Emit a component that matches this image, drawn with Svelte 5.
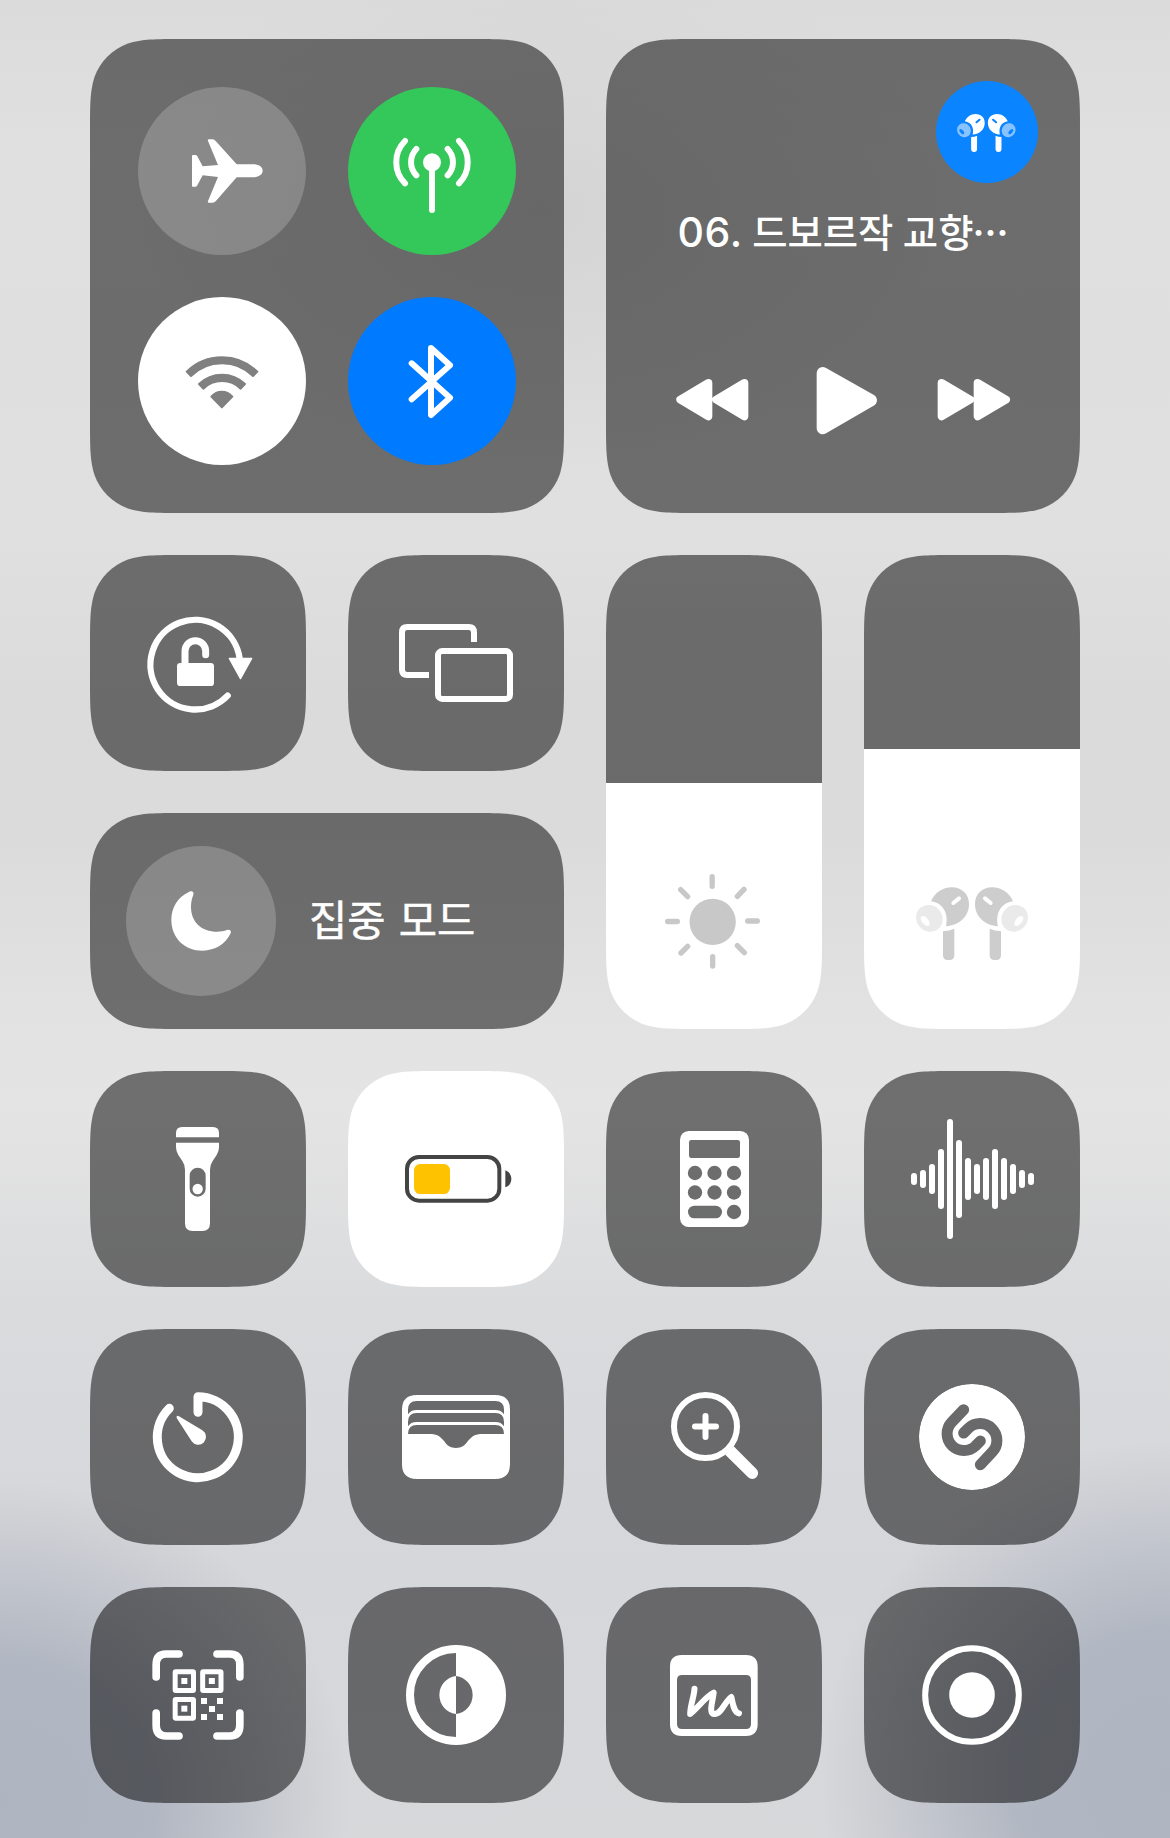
<script>
  // Continuous-curvature corner outline for a w × h tile.
  function squircle(w, h, r = 60) {
    const a = 1.52866 * r, b = 1.08849 * r, c = 0.86841 * r;
    const d = 0.63149 * r, e = 0.07491 * r, f = 0.37282 * r, g = 0.16906 * r;
    return `path("M${a} 0H${w - a}C${w - b} 0 ${w - c} 0 ${w - d} ${e}C${w - f} ${g} ${w - g} ${f} ${w - e} ${d}C${w} ${c} ${w} ${b} ${w} ${a}V${h - a}C${w} ${h - b} ${w} ${h - c} ${w - e} ${h - d}C${w - g} ${h - f} ${w - f} ${h - g} ${w - d} ${h - e}C${w - c} ${h} ${w - b} ${h} ${w - a} ${h}H${a}C${b} ${h} ${c} ${h} ${d} ${h - e}C${f} ${h - g} ${g} ${h - f} ${e} ${h - d}C0 ${h - c} 0 ${h - b} 0 ${h - a}V${a}C0 ${b} 0 ${c} ${e} ${d}C${g} ${f} ${f} ${g} ${d} ${e}C${c} 0 ${b} 0 ${a} 0Z")`;
  }

  const square = squircle(216, 216);
  const large = squircle(474, 474);
  const wide = squircle(474, 216);
  const tall = squircle(216, 474);

  const brightness = 246;
  const volume = 280;

  const wave = [18, 27, 45, 90, 180, 117, 63, 45, 63, 90, 63, 45, 27, 18];
  const keys = [339, 397.5, 456].flatMap((y) => [285, 343.5, 402].map((x) => [x, y])).filter(([x, y]) => y < 456 || x === 402);
  const finders = [[278, 268], [360.5, 268], [278, 351]];
  const dots = [[363, 354], [411, 354], [387, 378], [363, 402], [411, 402]];
</script>

{#snippet bud()}
  <path class="head" d="M993 424C1004 398 1028 382 1055 382C1086 382 1107 402 1107 433C1107 470 1077 497 1038 499C1046 466 1034 430 993 424Z" />
  <path class="slot" d="M1060 429L1077 415" />
  <ellipse class="tip" cx="988" cy="475" rx="41.5" ry="38.5" transform="rotate(50 988 475)" />
  <ellipse class="hole" cx="975.500" cy="483" rx="18" ry="9.500" transform="rotate(50 975.500 483)" />
  <path class="head" d="M1029 514Q1048 513 1063 506V586Q1063 600 1049 600H1043Q1029 600 1029 586Z" />
{/snippet}

{#snippet airpods(box)}
  <svg class="airpods" viewBox={box}>
    {@render bud()}
    <g transform="translate(2232 0) scale(-1 1)">{@render bud()}</g>
  </svg>
{/snippet}

<main>
  <section class="tile big connectivity" style:clip-path={large}>
    <button class="round dim" aria-label="에어플레인 모드">
      <svg viewBox="174 171 504 504">
        <path d="M336 378Q336 375 339 375H346Q350 375 352 379L368 409L414 405L384 333Q382 328 387 328H398Q403 328 407 333L470 403H520C538 403 548 412 548 422.500C548 433 538 441.500 520 441.500H470L407 514Q403 518 398 518H387Q382 518 384 513L414 441L368 436L352 466Q350 470.500 346 470.500H339Q336 470.500 336 467Z" />
      </svg>
    </button>
    <button class="round green" aria-label="셀룰러 데이터">
      <svg viewBox="804 171 504 504">
        <circle cx="1056" cy="397" r="27" />
        <path class="line s18" d="M1056 397V540M1009 357A57 57 0 0 0 1009 436M1103 357A57 57 0 0 1 1103 436M975 333A90 90 0 0 0 975 460M1137 333A90 90 0 0 1 1137 460" />
      </svg>
    </button>
    <button class="round white" aria-label="Wi-Fi">
      <svg class="wifi" viewBox="174 801 504 504">
        <path d="M320 1025A152 152 0 0 1 532 1025L519 1038A132 132 0 0 0 333 1038Z" />
        <path d="M357 1062A99 99 0 0 1 495 1062L482 1076A80 80 0 0 0 370 1076Z" />
        <path d="M394 1100Q407 1085 425.500 1085Q444 1085 457 1100L425.500 1132Z" />
      </svg>
    </button>
    <button class="round blue" aria-label="Bluetooth">
      <svg viewBox="804 801 504 504">
        <path class="line s18" d="M995 1000L1110 1103L1053 1155V954L1110 1006L995 1108" />
      </svg>
    </button>
  </section>

  <section class="tile big media" style:clip-path={large}>
    <button class="route" aria-label="AirPods Pro">{@render airpods('827.7 192.7 584.6 584.6')}</button>
    <p class="title"><span class="num">06.</span> 드보르작 교향<span class="dots">…</span></p>
    <div class="controls">
      <svg viewBox="217 991 240 240"><path class="tri s24" d="M326 1060L242 1110L326 1160ZM434 1060L350 1110L434 1160Z" /></svg>
      <svg viewBox="620 991 240 240"><path class="tri s36" d="M667 1030L812 1112L667 1196Z" /></svg>
      <svg viewBox="1001 991 240 240"><path class="tri s24" d="M1024 1060L1109 1110L1024 1160ZM1132 1060L1217 1110L1132 1160Z" /></svg>
    </div>
  </section>

  <button class="tile" style:clip-path={square} aria-label="화면 방향 고정">
    <svg viewBox="30 15 648 648">
      <path class="line s19" d="M479 325A134.500 134.500 0 1 0 443 437" />
      <path class="tri s4" d="M448 325H515L481.500 386Z" />
      <rect x="291" y="339" width="111" height="69" rx="10" />
      <path class="line s21" d="M315 347V303A31 31 0 0 1 377 303V314" />
    </svg>
  </button>
  <button class="tile" style:clip-path={square} aria-label="화면 미러링">
    <svg viewBox="804 15 648 648">
      <rect class="line s18" x="1074" y="303" width="216" height="144" rx="13" />
      <path class="line s18 butt" d="M1182 276V247Q1182 231 1166 231H982Q966 231 966 247V359Q966 375 982 375H1047" />
    </svg>
  </button>

  <section class="tile slider" style:clip-path={tall} style:--level="{brightness}px">
    <svg class="sun" viewBox="18 159 648 648">
      <circle cx="338" cy="485.500" r="69.500" />
      <path d="M336.500 350V379M338 590V618M203 484.500H232M443 483H472M412 409L432 388M242 389L263 410M243 579L263 559M412 557L433 578" />
    </svg>
  </section>
  <section class="tile slider" style:clip-path={tall} style:--level="{volume}px">
    {@render airpods('792 159 648 648')}
  </section>

  <section class="tile focus" style:clip-path={wide}>
    <span class="round dim moon">
      <svg viewBox="138 138 450 450">
        <path d="M328 275C336 271 343 276 340 284C336 294 333 306 333 320C333 366 364 395 412 395C422 395 432 393 441 390C449 387 455 393 452 400C437 432 405 452 368 452C314 452 274 414 274 359C274 322 294 290 328 275Z" />
      </svg>
    </span>
    <span class="label">집중 모드</span>
  </section>

  <button class="tile" style:clip-path={square} aria-label="손전등">
    <svg viewBox="30 33 648 648">
      <path d="M288 232V219Q288 201 306 201H399Q417 201 417 219V232Z" />
      <path fill-rule="evenodd" d="M288 248H417V262Q417 274 410 285L398 303Q390 314 390 330V490Q390 513 367 513H338Q315 513 315 490V330Q315 314 307 303L295 285Q288 274 288 262ZM329 347V386A24 24 0 0 0 377 386V347A24 24 0 0 0 329 347Z" />
      <circle cx="353" cy="387" r="15.500" />
    </svg>
  </button>
  <button class="tile lit" style:clip-path={square} aria-label="저전력 모드">
    <svg class="battery" viewBox="804 33 648 648">
      <rect class="case" x="981" y="291" width="277" height="131" rx="36" />
      <rect class="charge" x="1002" y="312" width="108" height="90" rx="19" />
      <path d="M1276 331C1287 335 1294 345 1294 357C1294 369 1287 379 1276 382Z" />
    </svg>
  </button>
  <button class="tile" style:clip-path={square} aria-label="계산기">
    <svg viewBox="18 33 648 648">
      <mask id="keys" maskUnits="userSpaceOnUse" x="18" y="33" width="648" height="648">
        <rect x="240" y="213" width="207" height="288" rx="26" />
        <g class="cut">
          <rect x="267" y="240" width="153" height="54" rx="7" />
          {#each keys as [x, y]}<circle cx={x} cy={y} r="21.500" />{/each}
          <rect x="264" y="437" width="102" height="38" rx="19" />
        </g>
      </mask>
      <rect mask="url(#keys)" x="240" y="213" width="207" height="288" />
    </svg>
  </button>
  <button class="tile" style:clip-path={square} aria-label="음성 메모">
    <svg viewBox="792 33 648 648">
      {#each wave as h, i}<rect x={933 + 27 * i} y={357 - h} width="18" height={h * 2} rx="9" />{/each}
    </svg>
  </button>

  <button class="tile" style:clip-path={square} aria-label="타이머">
    <svg viewBox="30 27 648 648">
      <path class="line s27" d="M354 277V230A121.500 121.500 0 1 1 268 265" />
      <path d="M297 289L367 331A23.500 23.500 0 1 1 335 364L290 294Q288 284 297 289Z" />
    </svg>
  </button>
  <button class="tile" style:clip-path={square} aria-label="지갑">
    <svg viewBox="804 27 648 648">
      <path fill-rule="evenodd" d="M1010 225H1246Q1290 225 1290 269V433Q1290 477 1246 477H1010Q966 477 966 433V269Q966 225 1010 225ZM984 269Q984 243 1010 243H1246Q1272 243 1272 269V283Q1264 270 1246 270H1010Q992 270 984 283ZM984 306Q984 279 1010 279H1246Q1272 279 1272 306V319Q1264 306 1246 306H1010Q992 306 984 319ZM984 342Q984 315 1010 315H1246Q1272 315 1272 342H1202C1183 342 1172 353 1163 364C1153 378 1145 384 1128 384C1111 384 1102 378 1093 364C1084 353 1073 342 1054 342Z" />
    </svg>
  </button>
  <button class="tile" style:clip-path={square} aria-label="확대기">
    <svg viewBox="18 27 648 648">
      <circle class="line s18" cx="316.500" cy="319.500" r="94.500" />
      <path class="line s18" d="M285 319.500H348M316.500 288V351" />
      <path d="M401 379L469 447A17.500 17.500 0 0 1 444.500 472L376 404Z" />
    </svg>
  </button>
  <button class="tile" style:clip-path={square} aria-label="음악 인식">
    <svg viewBox="792 27 648 648">
      <mask id="shazam" maskUnits="userSpaceOnUse" x="792" y="27" width="648" height="648">
        <circle cx="1116" cy="351" r="159" />
        <path class="carve" d="M1091 269L1055.300 306.300A50.500 50.500 0 0 0 1126.700 377.700L1141 363M1141 434L1176.700 396.200A50.500 50.500 0 0 0 1105.300 324.800L1091 339" />
      </mask>
      <circle mask="url(#shazam)" cx="1116" cy="351" r="159" />
    </svg>
  </button>

  <button class="tile" style:clip-path={square} aria-label="코드 스캐너">
    <svg viewBox="30 21 648 648">
      <path class="line s23" d="M228.500 291V254Q228.500 222 258 222H297M411 222H450Q479.500 222 479.500 254V291M228.500 399V436Q228.500 468 258 468H297M411 468H450Q479.500 468 479.500 436V399" />
      {#each finders as [x, y]}
        <rect class="line s15" x={x + 7.5} y={y + 7.5} width="55" height="56" rx="2" />
        <rect x={x + 26} y={y + 26} width="18" height="18" />
      {/each}
      {#each dots as [x, y]}<rect {x} {y} width="18" height="18" />{/each}
    </svg>
  </button>
  <button class="tile" style:clip-path={square} aria-label="다크 모드">
    <svg viewBox="804 21 648 648">
      <circle class="line s24" cx="1128" cy="345" r="138" />
      <path d="M1128 216A129 129 0 0 1 1128 474V402A57.500 57.500 0 0 0 1128 288ZM1128 288A57.500 57.500 0 0 0 1128 402Z" />
    </svg>
  </button>
  <button class="tile" style:clip-path={square} aria-label="빠른 메모">
    <svg viewBox="18 21 648 648">
      <path fill-rule="evenodd" d="M245 225H438Q473 225 473 260V433Q473 468 438 468H245Q210 468 210 433V260Q210 225 245 225ZM246 285Q231 285 231 300V432Q231 447 246 447H438Q453 447 453 432V300Q453 285 438 285Z" />
      <path class="line s18" d="M283.500 326C282 352 271 374 270.500 402C292 385 318 349 341 338C340 358 323 402 344 402C365 402 376 362 394 351C399 372 401 396 417 400" />
    </svg>
  </button>
  <button class="tile" style:clip-path={square} aria-label="화면 기록">
    <svg viewBox="792 21 648 648">
      <circle class="line s18" cx="1116" cy="345" r="140.500" />
      <circle cx="1116" cy="345" r="68.500" />
    </svg>
  </button>
</main>

<style>
  :global(body) {
    margin: 0;
  }

  main {
    box-sizing: border-box;
    width: 1170px;
    height: 1838px;
    padding: 39px 90px 35px;
    display: grid;
    grid-template-columns: repeat(4, 216px);
    grid-auto-rows: 216px;
    gap: 42px;
    overflow: hidden;
    color: #fff;
    font-family: 'Noto Sans CJK KR', sans-serif;
    background:
      radial-gradient(ellipse 350px 320px at 0 1800px, #aeb4c0 0%, #aeb4c0e6 45%, #aeb4c000 100%),
      radial-gradient(ellipse 350px 340px at 1170px 1780px, #aeb4c0 0%, #aeb4c0e6 45%, #aeb4c000 100%),
      radial-gradient(ellipse 420px 260px at 540px 210px, #d4d4d4 0%, #d4d4d400 100%),
      linear-gradient(#dbdbdb 0, #e0e0e0 150px, #dfdfdf 350px, #e0e0e0 530px, #dbdbdb 700px, #dbdbdb 830px, #e3e3e3 1040px, #e4e4e4 1110px, #dadbdd 1310px, #d6d7da 1560px, #d7d8da 1838px);
  }

  button {
    padding: 0;
    border: 0;
    color: inherit;
    font: inherit;
  }

  svg {
    display: block;
    width: 100%;
    height: 100%;
    fill: #fff;
  }

  .tile {
    background: rgba(0, 0, 0, 0.515);
  }

  .lit {
    background: #fff;
  }

  .big {
    grid-column: span 2;
    grid-row: span 2;
  }

  .connectivity {
    display: grid;
    grid-template-columns: repeat(2, 168px);
    grid-auto-rows: 168px;
    gap: 42px;
    padding: 48px;
  }

  .round {
    border-radius: 50%;
  }

  .dim { background: rgba(255, 255, 255, 0.2); }
  .green { background: #34c759; }
  .white { background: #fff; }
  .blue { background: #007aff; }

  .wifi {
    fill: #808080;
    stroke: #808080;
    stroke-width: 6;
    stroke-linejoin: round;
  }

  .line {
    fill: none;
    stroke: #fff;
    stroke-linecap: round;
    stroke-linejoin: round;
  }

  .butt { stroke-linecap: butt; }

  .tri {
    stroke: #fff;
    stroke-linejoin: round;
  }

  .s4 { stroke-width: 4; }
  .s15 { stroke-width: 15; }
  .s18 { stroke-width: 18; }
  .s19 { stroke-width: 19; }
  .s21 { stroke-width: 21; }
  .s23 { stroke-width: 23; }
  .s24 { stroke-width: 24; }
  .s27 { stroke-width: 27; }
  .s36 { stroke-width: 36; }

  .cut { fill: #000; }

  .carve {
    fill: none;
    stroke: #000;
    stroke-width: 33;
    stroke-linecap: round;
  }

  .media {
    display: flex;
    flex-direction: column;
    padding: 42px 42px 0;
  }

  .route {
    width: 102px;
    height: 102px;
    align-self: flex-end;
    border-radius: 50%;
    background: #0a84ff;
    --head: #fff;
    --tip: #89c3ff;
    --gap: #0a84ff;
  }

  .title {
    margin: 19px 0 0;
    padding-left: 29.5px;
    height: 56px;
    line-height: 56px;
    font-size: 38.4px;
    font-weight: 500;
    word-spacing: 0.8px;
    white-space: nowrap;
  }

  .num {
    font-family: Inter, sans-serif;
    font-size: 41px;
    letter-spacing: 0.6px;
  }

  .dots {
    font-family: 'Noto Sans CJK JP', sans-serif;
    font-size: 36px;
    font-weight: 700;
    margin-left: -1px;
  }

  .controls {
    display: flex;
    margin: 102px 0 0 24.3px;
  }

  .controls svg {
    width: 80px;
    height: 80px;
  }

  .controls svg:nth-child(2) { margin: 0 47px 0 54.4px; }

  .slider {
    grid-row: span 2;
    display: flex;
    align-items: flex-end;
    background: linear-gradient(to top, #fff var(--level), rgba(0, 0, 0, 0.515) var(--level));
  }

  .slider svg {
    height: 216px;
  }

  .slider .airpods {
    --head: #cdcdcd;
    --tip: #eaeaea;
    --gap: #fff;
  }

  .sun {
    fill: #c8c8c8;
    stroke: #c8c8c8;
    stroke-width: 16;
    stroke-linecap: round;
  }

  .sun circle { stroke: none; }

  .head { fill: var(--head); }
  .tip { fill: var(--tip); }
  .hole { fill: var(--gap); }

  .slot {
    stroke: var(--gap);
    stroke-width: 12;
    stroke-linecap: round;
  }

  .focus {
    grid-column: span 2;
    display: flex;
    align-items: center;
    padding-left: 36px;
  }

  .moon {
    width: 150px;
    height: 150px;
  }

  .label {
    margin-left: 33px;
    padding-bottom: 6px;
    font-size: 41.6px;
    word-spacing: 4px;
    -webkit-text-stroke: 0.5px #fff;
  }

  .battery { fill: #444; }

  .case {
    fill: none;
    stroke: #444;
    stroke-width: 12;
  }

  .charge { fill: #ffc200; }
</style>
